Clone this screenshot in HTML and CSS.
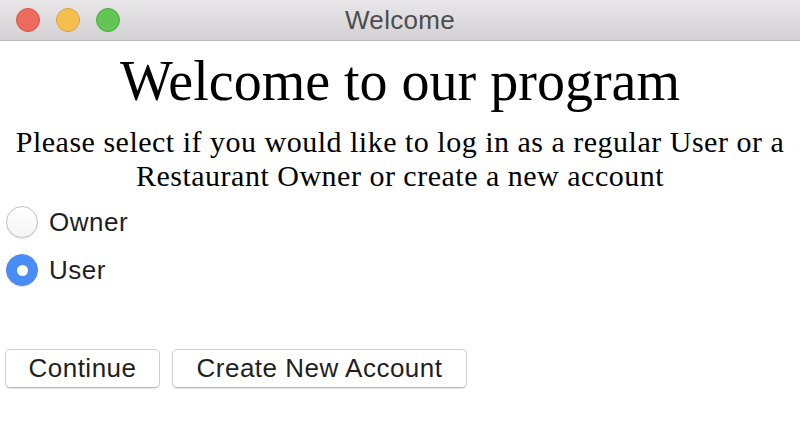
FILE: index.html
```html
<!DOCTYPE html>
<html>
<head>
<meta charset="utf-8">
<link rel="stylesheet" href="styles.css">
</head>
<body>
<div class="window">
  <div class="titlebar">
    <div class="lights">
      <span class="light red"></span>
      <span class="light yellow"></span>
      <span class="light green"></span>
    </div>
    <div class="title">Welcome</div>
  </div>
  <div class="content">
    <h1 class="heading">Welcome to our program</h1>
    <p class="intro">Please select if you would like to log in as a regular User or a Restaurant Owner or create a new account</p>
    <div class="options">
      <label class="option"><span class="radio"></span><span class="label">Owner</span></label>
      <label class="option"><span class="radio checked"></span><span class="label">User</span></label>
    </div>
    <div class="buttons">
      <button class="btn btn-continue">Continue</button>
      <button class="btn btn-create">Create New Account</button>
    </div>
  </div>
</div>
</body>
</html>
```
FILE: styles.css
```css
* { box-sizing: border-box; }
html, body { margin: 0; padding: 0; background: #ffffff; }
.window { width: 800px; height: 442px; overflow: hidden; display: flex; flex-direction: column; }
.titlebar {
  height: 41px;
  flex: none;
  background: linear-gradient(#e8e6e8, #d3d1d3);
  border-bottom: 1px solid #b9b7b9;
  display: flex;
  align-items: center;
  position: relative;
}
.lights { display: flex; gap: 16px; padding-left: 16px; }
.light { width: 24px; height: 24px; border-radius: 50%; display: block; }
.red { background: #ed6a5e; border: 1px solid #d65548; }
.yellow { background: #f5bf4f; border: 1px solid #d8a33f; }
.green { background: #62c554; border: 1px solid #4ea83f; }
.title {
  position: absolute; left: 0; right: 0; top: 0; bottom: 0;
  display: flex; align-items: center; justify-content: center;
  font-family: "Liberation Sans", Arial, sans-serif;
  font-size: 26px; letter-spacing: 0.3px; color: #4d4d4d;
}
.content { flex: 1; display: flex; flex-direction: column; }
.heading {
  margin: 9px 0 0 0;
  font-family: "Liberation Serif", "Times New Roman", serif;
  font-weight: normal;
  font-size: 56px;
  line-height: 62px;
  text-align: center;
  color: #000;
}
.intro {
  margin: 13px 8px 0 8px;
  font-family: "Liberation Serif", "Times New Roman", serif;
  font-size: 30px;
  letter-spacing: 0.5px;
  line-height: 34px;
  text-align: center;
  color: #000;
}
.options { display: flex; flex-direction: column; gap: 16px; margin-top: 13px; padding-left: 6px; }
.option { display: flex; align-items: center; gap: 11px; height: 32px; }
.radio {
  width: 32px; height: 32px; border-radius: 50%;
  background: linear-gradient(#ffffff, #f4f4f4);
  border: 1px solid #c2c2c2;
  box-shadow: 0 1px 1px rgba(0,0,0,0.12);
  position: relative;
  flex: none;
}
.radio.checked { background: #4a8cf5; border-color: #4a8cf5; }
.radio.checked::after {
  content: ""; position: absolute; left: 10px; top: 10px;
  width: 11px; height: 11px; border-radius: 50%; background: #fff;
}
.label { font-family: "Liberation Sans", Arial, sans-serif; font-size: 26px; letter-spacing: 0.5px; color: #1f1f1f; }
.buttons { display: flex; gap: 12px; margin-top: 63px; padding-left: 5px; }
.btn {
  height: 39px;
  background: #fff;
  border: 1px solid #d0d0d0;
  border-bottom-color: #b8b8b8;
  border-radius: 5px;
  box-shadow: 0 1px 1px rgba(0,0,0,0.1);
  font-family: "Liberation Sans", Arial, sans-serif;
  font-size: 26px;
  letter-spacing: 0.5px;
  color: #1f1f1f;
  padding: 0;
}
.btn-continue { width: 155px; }
.btn-create { width: 295px; }
```
